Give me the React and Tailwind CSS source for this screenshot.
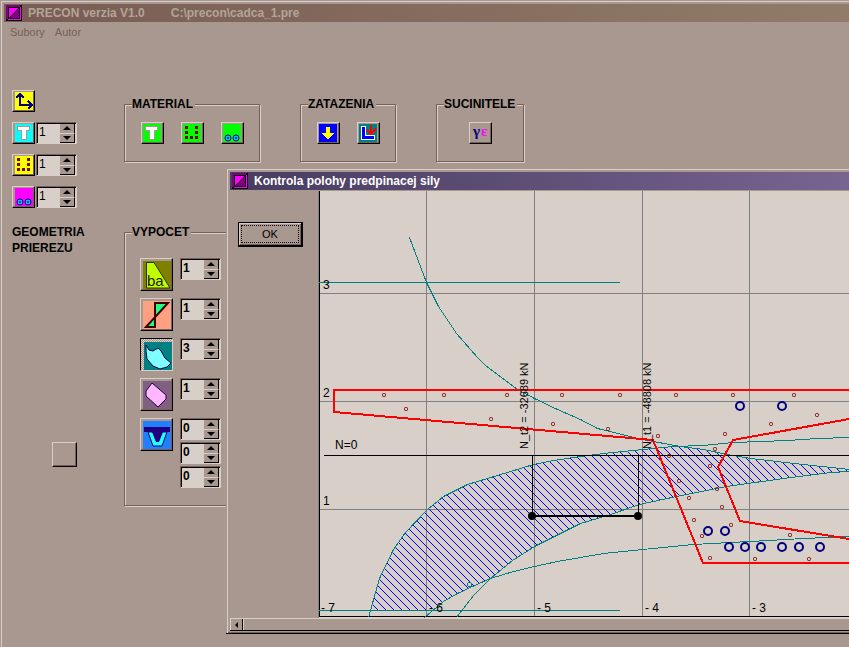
import { useState } from "react";
import clsx from "clsx";

const raised =
  "border border-t-[#d8d0c8] border-l-[#d8d0c8] border-r-black border-b-black shadow-[inset_-1px_-1px_0_#786058]";

// small 18x18 toolbar icons
const AxesIcon = () => (
  <svg width="18" height="18" viewBox="0 0 18 18" shapeRendering="crispEdges">
    <rect width="18" height="18" fill="#ffff00" />
    <path d="M5 2V13H16M1 6L5 2L9 6M13 9L17 13L13 17" fill="none" stroke="#000080" strokeWidth="2" />
  </svg>
);

const BeamIcon = ({ color }) => (
  <svg width="18" height="18" viewBox="0 0 18 18" shapeRendering="crispEdges">
    <rect width="18" height="18" fill={color} />
    <path d="M2 2H15V7H12V16H6V7H2Z" fill="#a8988f" />
    <path d="M3 3H14V6H11V15H7V6H3Z" fill="#ffffff" />
  </svg>
);

const BarsIcon = ({ color }) => (
  <svg width="18" height="18" viewBox="0 0 18 18" shapeRendering="crispEdges">
    <rect width="18" height="18" fill={color} />
    <path
      d="M2 2h3v3h-3zM12 2h3v3h-3zM2 7h3v3h-3zM12 7h3v3h-3zM2 12h3v3h-3zM7 12h3v3h-3zM12 12h3v3h-3z"
      fill="#800000"
    />
  </svg>
);

const CablesIcon = ({ color }) => (
  <svg width="18" height="18" viewBox="0 0 18 18">
    <rect width="18" height="18" fill={color} />
    {[5, 13].map((cx) => (
      <g key={cx}>
        <circle cx={cx} cy="14" r="3" fill="#00c0ff" stroke="#000080" strokeWidth="1" />
        <circle cx={cx} cy="14" r="1" fill="#000080" />
      </g>
    ))}
  </svg>
);

const LoadIcon = () => (
  <svg width="18" height="18" viewBox="0 0 18 18" shapeRendering="crispEdges">
    <rect width="18" height="18" fill="#0000ff" />
    <path d="M7 3H11V9H15L9 16L3 9H7Z" fill="#ffff00" />
  </svg>
);

const CornerLoadIcon = () => (
  <svg width="18" height="18" viewBox="0 0 18 18" shapeRendering="crispEdges">
    <rect width="18" height="18" fill="#008080" />
    <path d="M2 2H7V11H16V16H2Z" fill="#ffffff" />
    <path d="M3 3H6V12H15V15H3Z" fill="#0000ff" />
    <path d="M12 1V10M8 6L12 10L17 5" fill="none" stroke="#ff0000" strokeWidth="2" />
  </svg>
);

const FactorsIcon = () => (
  <svg width="18" height="18" viewBox="0 0 18 18" fontFamily="Liberation Serif, serif" fontSize="15" fontWeight="bold">
    <text x="2" y="12" fill="#000080">γ</text>
    <text x="10" y="12" fill="#ff00ff">ε</text>
  </svg>
);

// 28x28 calculation icons
const StressIcon = () => (
  <svg width="28" height="28" viewBox="0 0 28 28">
    <rect width="28" height="28" fill="#808000" />
    <path d="M3.5 1.5H11L27 27H3.5Z" fill="#c0ff00" stroke="#303000" />
    <text x="4" y="25" fontSize="15" fontFamily="Liberation Sans Narrow, Liberation Sans, sans-serif" fill="#202000">ba</text>
  </svg>
);

const DiagramIcon = () => (
  <svg width="28" height="28" viewBox="0 0 28 28">
    <rect width="28" height="28" fill="#ffa080" />
    <path d="M12 2H25L3 26H12Z" fill="#20ff80" stroke="#400000" strokeWidth="2" />
  </svg>
);

const ZoneIcon = () => (
  <svg width="28" height="28" viewBox="0 0 28 28">
    <rect width="28" height="28" fill="#008080" />
    <path
      d="M2 3L5 8L9 9L14 6L17 9L21 16L27 21L23 25L16 27L9 24L3 17L2 9Z"
      fill="#80ffff"
      stroke="#000050"
    />
  </svg>
);

const CoreIcon = () => (
  <svg width="28" height="28" viewBox="0 0 28 28">
    <rect width="28" height="28" fill="#806080" />
    <path d="M9 2L23 14V18L15 26L3 15V10Z" fill="#ffb8ff" stroke="#200040" />
  </svg>
);

const TroughIcon = () => (
  <svg width="28" height="28" viewBox="0 0 28 28">
    <rect width="28" height="28" fill="#2080ff" />
    <path d="M5 11H24L19 25H10Z" fill="#20ffff" stroke="#200060" />
    <path d="M9 11H20L16 21H13Z" fill="#200080" />
    <rect x="1" y="6" width="26" height="5" fill="#200080" />
  </svg>
);

const AppIcon = () => (
  <svg width="16" height="16" viewBox="0 0 16 16" shapeRendering="crispEdges">
    <rect width="16" height="16" fill="#000000" />
    <path d="M0 0H14V2H2V14H0Z" fill="#800080" />
    <path d="M14 2H15V15H2V14H14Z" fill="#ff00ff" />
    <path d="M3 3H13L3 13Z" fill="#ff00ff" />
    <path d="M13 3V13H3Z" fill="#800080" />
    <path d="M1 15L15 1" stroke="#000000" />
  </svg>
);

const IconButton = ({ label, children }) => (
  <button type="button" aria-label={label} className={clsx("flex h-[22px] w-[23px] items-center justify-center", raised)}>
    {children}
  </button>
);

const CalcButton = ({ label, pressed, children }) => (
  <button
    type="button"
    aria-label={label}
    aria-pressed={!!pressed}
    className={clsx(
      "flex h-[33px] w-[33px] items-center justify-center",
      pressed
        ? "border border-t-black border-l-black border-r-[#d8d0c8] border-b-[#d8d0c8] bg-[repeating-conic-gradient(#d8d0c8_0_25%,#a8988f_0_50%)] bg-[length:2px_2px] pt-0.5 pl-0.5"
        : raised
    )}
  >
    {children}
  </button>
);

const Spinner = ({ label, start, bold }) => {
  const [value, setValue] = useState(start);

  return (
    <div className="flex h-[22px] w-[41px] border border-t-[#786058] border-l-[#786058] border-r-[#d8d0c8] border-b-[#d8d0c8] bg-[#d8d0c8] shadow-[inset_1px_1px_0_#000]">
      <input
        type="text"
        aria-label={label}
        value={value}
        onChange={(e) => setValue(Number(e.target.value.replace(/\D/g, "")))}
        className={clsx("h-[18px] w-full min-w-0 flex-1 pl-0.5 text-xs outline-none", bold && "font-bold")}
      />
      <div className="mt-px mr-px flex w-[15px] shrink-0 flex-col bg-[#a8988f]">
        <button
          type="button"
          aria-label={`${label} +`}
          onClick={() => setValue(value + 1)}
          className="flex flex-1 items-center justify-center border-r border-b border-black border-b-[#d8d0c8]"
        >
          <svg width="8" height="4" viewBox="0 0 8 4"><path d="M4 0L8 4H0Z" /></svg>
        </button>
        <button
          type="button"
          aria-label={`${label} -`}
          onClick={() => setValue(Math.max(0, value - 1))}
          className="flex flex-1 items-center justify-center border-r border-b border-black"
        >
          <svg width="8" height="4" viewBox="0 0 8 4"><path d="M0 0H8L4 4Z" /></svg>
        </button>
      </div>
    </div>
  );
};

const Group = ({ title, className, children }) => (
  <fieldset className={clsx("border border-[#786058] shadow-[1px_1px_0_#d8d0c8,inset_1px_1px_0_#d8d0c8]", className)}>
    <legend className="ml-[7px] bg-[#a8988f] pr-0.5 text-xs leading-4 font-bold">{title}</legend>
    {children}
  </fieldset>
);

const gridX = [426, 534, 642, 749, 857, 965, 1073];
const gridY = [293, 401, 509];

// start x of the 45 degree hatch lines on y = 440
const hatch = Array.from({ length: 90 }, (_, i) => 192 + i * 8);

const bars = [
  [384, 395], [444, 395], [507, 395], [562, 395], [620, 395], [676, 395], [733, 395], [794, 395],
  [406, 409], [491, 419], [553, 424], [608, 429], [658, 436], [669, 456], [679, 481], [689, 498],
  [694, 520], [702, 536], [710, 558], [755, 559], [809, 559], [817, 415], [771, 424], [725, 434],
  [715, 449], [710, 466], [717, 489], [722, 507], [731, 525], [790, 535],
];

const cables = [
  [740, 406], [782, 406], [708, 531], [725, 531], [729, 547],
  [745, 547], [761, 547], [782, 547], [799, 547], [820, 547],
];

const xLabels = [
  [321, "- 7"], [429, "- 6"], [537, "- 5"], [645, "- 4"], [752, "- 3"],
];

const Plot = () => (
  <svg
    role="img"
    aria-label="Kontrola polohy predpinacej sily"
    className="block h-[427px] w-full bg-[#d8d0c8]"
    fontFamily="Liberation Sans, sans-serif"
    fontSize="11"
  >
    <defs>
      {/* allowable zone */}
      <clipPath id="zone">
        <path d="M370 610L379 578L393 549L405 532L427 509L443 496L467 484L497 475L533 464L553 460L580 456L603 453L642 449L680 446L703 449L727 454L750 458L803 464L849 469V471L830 472L783 478L726 486L676 496L639 504L607 515L580 523L558 534L534 546L512 560L490 578L472 586L443 601L429 610Z" />
      </clipPath>
    </defs>
    <g transform="translate(-317.5 -190.5)" fill="none" shapeRendering="crispEdges">
      <g stroke="#808080">
        {gridX.map((x) => <path key={x} d={`M${x} 190V616`} />)}
        {gridY.map((y) => <path key={y} d={`M319 ${y}H1200`} />)}
        <path d="M318 190V617" />
      </g>
      <path d="M319 190V616H1200" stroke="#000000" />

      <g clipPath="url(#zone)" stroke="#0000ff">
        {hatch.map((x) => <path key={x} d={`M${x} 440l180 180`} />)}
      </g>

      <g stroke="#008080">
        <path d="M318 282H619M318 610H619" />
        <path d="M409 237L426 282L438 306L456 333L477 357L485 365L517 389L534 398L557 409L580 419L597 428L642 439L680 446L703 449L727 454L750 458L803 464L849 469" />
        <path d="M368 617L379 578L393 549L405 532L427 509L443 496L467 484L497 475L533 464L553 460L580 456L603 453L642 449L673 446L703 445L733 442L787 440L817 438L849 437" />
        <path d="M456 617L473 595L490 578L512 560L534 546L558 534L580 523L607 515L639 504L676 496L726 486L783 478L830 472L849 471" />
        <path d="M424 617L443 601L457 593L472 586L490 578L513 571L534 566L557 561L580 557L603 553L642 549L693 544L730 542L750 541L803 538L849 536" />
        <circle cx="469" cy="584" r="2" />
      </g>
      <path d="M323 455H1200M532 455V516M638 455V516" stroke="#000000" />
    </g>

    <g transform="translate(-318 -191)" fill="none">
      <g stroke="#ff0000" strokeWidth="2" shapeRendering="crispEdges">
        <path d="M1200 390H334V412L653 440L703 563H1200" />
        <path d="M1200 355L849 419L733 440L718 467L740 521L849 539L1200 596" />
      </g>
      <g stroke="#800000">
        {bars.map(([x, y]) => <rect key={`${x}-${y}`} x={x - 1.5} y={y - 1.5} width="3" height="3" rx="1" />)}
      </g>
      <g stroke="#000080" strokeWidth="2">
        {cables.map(([x, y]) => <circle key={`${x}-${y}`} cx={x} cy={y} r="4" />)}
      </g>
      <path d="M532 516H638" stroke="#000000" strokeWidth="2" />
      <circle cx="532" cy="516" r="4" fill="#000000" />
      <circle cx="638" cy="516" r="4" fill="#000000" />
    </g>

    <g transform="translate(-318 -191)" fill="#000000">
      <g fontSize="12">
        <text x="323" y="289">3</text>
        <text x="323" y="397">2</text>
        <text x="323" y="505">1</text>
        <text x="335" y="449">N=0</text>
        {xLabels.map(([x, label]) => <text key={x} x={x} y="612">{label}</text>)}
      </g>
      <text transform="translate(528 449) rotate(-90)">N_t2 = -32689 kN</text>
      <text transform="translate(651 449) rotate(-90)">N_t1 = -48808 kN</text>
    </g>
  </svg>
);

const ForceDialog = () => (
  <section
    role="dialog"
    aria-labelledby="dialog-title"
    className="absolute top-[168px] right-0 left-[226px] border-b border-black bg-[#a8988f] pt-px pl-px"
  >
    <div className="border-t border-l border-[#d8d0c8] pt-0.5 pb-0.5 pl-0.5 shadow-[inset_0_-1px_0_#786058]">
      <header className="mb-px flex h-[18px] items-center gap-1.5 bg-linear-to-r from-[#483c60] to-[#786490] pl-0.5 text-white">
        <AppIcon />
        <h2 id="dialog-title" className="text-xs font-bold whitespace-nowrap">Kontrola polohy predpinacej sily</h2>
      </header>
      <div className="flex">
        <div className="w-[88px] shrink-0 pt-[31px] pl-2">
          <button
            type="button"
            className="block h-[25px] w-[65px] border border-r-2 border-b-2 border-black p-0.5 shadow-[inset_1px_1px_0_#d8d0c8,inset_-1px_-1px_0_#786058]"
          >
            <span className="block border border-dotted border-black text-[11px] leading-4">OK</span>
          </button>
        </div>
        <div className="min-w-0 flex-1">
          <Plot />
        </div>
      </div>
      <div className="flex h-[13px] border-t border-b border-t-[#d8d0c8] border-b-black">
        <button
          type="button"
          aria-label="Posun vlavo"
          className="flex w-[13px] items-center justify-center border-r border-l border-l-[#d8d0c8] border-r-black"
        >
          <svg width="3" height="6" viewBox="0 0 3 6"><path d="M3 0V6L0 3Z" /></svg>
        </button>
        <div className="flex-1 border-l border-[#d8d0c8]" />
      </div>
    </div>
  </section>
);

const App = () => {
  return (
    <div className="relative min-h-screen overflow-hidden bg-[#a8988f] pt-px pl-px font-['Liberation_Sans',Arial,sans-serif] text-black">
      <div className="min-h-[646px] border-t border-l border-[#d8d0c8] pt-0.5 pl-0.5">
        <header className="flex h-[18px] items-center gap-1.5 bg-linear-to-r from-[#785c54] to-[#907c68] pl-0.5 text-xs font-bold text-[#b4a498]">
          <AppIcon />
          <h1 className="flex gap-[26px] whitespace-nowrap">
            <span>PRECON verzia V1.0</span>
            <span>C:\precon\cadca_1.pre</span>
          </h1>
        </header>

        <nav className="flex h-5 items-center gap-2.5 pl-1.5 text-[11px] text-[#786058]">
          <button type="button">Subory</button>
          <button type="button">Autor</button>
        </nav>

        <main className="flex pt-12 pl-2">
          <div className="w-28 shrink-0">
            <div className="flex flex-col gap-2.5">
              <IconButton label="Osi"><AxesIcon /></IconButton>
              <div className="flex gap-px">
                <IconButton label="Beton"><BeamIcon color="#00ffff" /></IconButton>
                <Spinner label="Beton cislo" start={1} />
              </div>
              <div className="flex gap-px">
                <IconButton label="Vystuz"><BarsIcon color="#ffff00" /></IconButton>
                <Spinner label="Vystuz cislo" start={1} />
              </div>
              <div className="flex gap-px">
                <IconButton label="Kable"><CablesIcon color="#ff00ff" /></IconButton>
                <Spinner label="Kable cislo" start={1} />
              </div>
            </div>
            <p className="mt-4 text-xs leading-4 font-bold">
              GEOMETRIA
              <br />
              PRIEREZU
            </p>
            <button type="button" aria-label="Prierez" className={clsx("mt-[186px] ml-10 block h-[25px] w-[25px]", raised)} />
          </div>

          <div className="flex flex-col gap-[62px] pt-1.5">
            <div className="flex items-start gap-10">
              <Group title="MATERIAL" className="h-[66px] w-[136px]">
                <div className="flex justify-center gap-[17px] pt-2.5">
                  <IconButton label="Beton"><BeamIcon color="#00ff00" /></IconButton>
                  <IconButton label="Vystuz"><BarsIcon color="#00ff00" /></IconButton>
                  <IconButton label="Kable"><CablesIcon color="#00ff00" /></IconButton>
                </div>
              </Group>
              <Group title="ZATAZENIA" className="h-[66px] w-24">
                <div className="flex justify-center gap-[17px] pt-2.5">
                  <IconButton label="Sila"><LoadIcon /></IconButton>
                  <IconButton label="Zatazenie"><CornerLoadIcon /></IconButton>
                </div>
              </Group>
              <Group title="SUCINITELE" className="h-[66px] w-[88px]">
                <div className="flex justify-center pt-2.5">
                  <IconButton label="Gama"><FactorsIcon /></IconButton>
                </div>
              </Group>
            </div>

            <Group title="VYPOCET" className="h-[282px] w-[136px]">
              <div className="flex gap-[7px] pt-[18px] pl-[15px]">
                <div className="flex flex-col gap-[7px]">
                  <CalcButton label="Napatia"><StressIcon /></CalcButton>
                  <CalcButton label="Priebeh"><DiagramIcon /></CalcButton>
                  <CalcButton label="Poloha sily" pressed><ZoneIcon /></CalcButton>
                  <CalcButton label="Jadro"><CoreIcon /></CalcButton>
                  <CalcButton label="Unosnost"><TroughIcon /></CalcButton>
                </div>
                <div className="flex flex-col gap-[18px]">
                  <Spinner label="Napatia cislo" start={1} bold />
                  <Spinner label="Priebeh cislo" start={1} bold />
                  <Spinner label="Poloha cislo" start={3} bold />
                  <Spinner label="Jadro cislo" start={1} bold />
                  <div className="flex flex-col gap-0.5">
                    <Spinner label="Unosnost 1" start={0} bold />
                    <Spinner label="Unosnost 2" start={0} bold />
                    <Spinner label="Unosnost 3" start={0} bold />
                  </div>
                </div>
              </div>
            </Group>
          </div>
        </main>
      </div>
      <ForceDialog />
    </div>
  );
};

export default App;
